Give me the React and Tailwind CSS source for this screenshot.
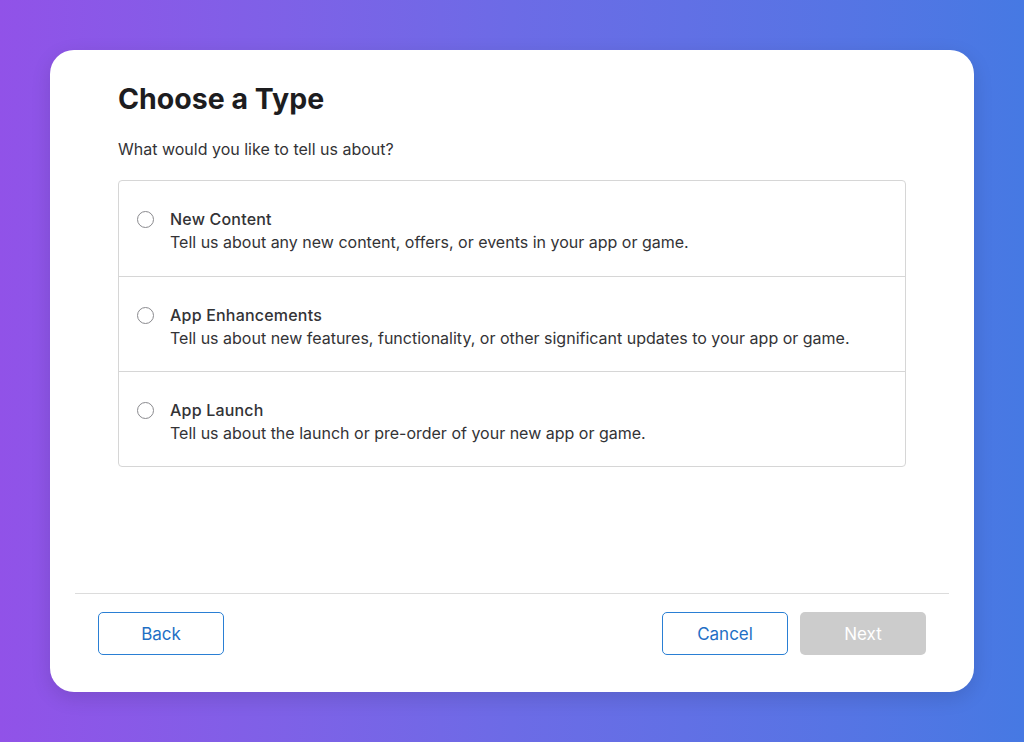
const options = [
  {
    title: "New Content",
    desc: "Tell us about any new content, offers, or events in your app or game.",
  },
  {
    title: "App Enhancements",
    desc: "Tell us about new features, functionality, or other significant updates to your app or game.",
  },
  {
    title: "App Launch",
    desc: "Tell us about the launch or pre-order of your new app or game.",
  },
];

export default function App() {
  return (
    <div
      className="h-[742px] w-full bg-gradient-to-r from-[#9152e8] via-[#6c6be6] to-[#4679e3] px-[50px] py-[50px]"
      style={{ fontFamily: "Inter, 'Noto Sans', sans-serif" }}
    >
      <div className="flex h-[642px] flex-col rounded-[24px] bg-white shadow-[0_6px_20px_rgba(0,0,0,0.12)]">
        <div className="flex-1 px-[68px] pt-[30px]">
          <h1 className="text-[28.5px] leading-[38px] font-bold text-[#1d1d1f]">
            Choose a Type
          </h1>
          <p className="mt-[21px] text-[16px] leading-[20px] text-[#333336]">
            What would you like to tell us about?
          </p>
          <div className="mt-[21px] rounded-[4px] border border-[#d6d6d6]">
            {options.map((o, i) => (
              <label
                key={o.title}
                className={
                  "flex h-[95px] cursor-pointer items-start gap-[16px] pl-[18px] pt-[27px] " +
                  (i > 0 ? "border-t border-[#d6d6d6]" : "")
                }
              >
                <span className="mt-[3px] h-[17px] w-[17px] shrink-0 rounded-full border border-[#8a8a8e] bg-white" />
                <span className="flex flex-col">
                  <span className="text-[16px] leading-[22px] font-medium tracking-[0.2px] text-[#333336]">
                    {o.title}
                  </span>
                  <span className="text-[16px] leading-[24px] text-[#333336]">
                    {o.desc}
                  </span>
                </span>
              </label>
            ))}
          </div>
        </div>
        <div className="mx-[25px] border-t border-[#dcdcdc]" />
        <div className="flex items-center justify-between px-[48px] pt-[18px] pb-[37px]">
          <button className="h-[43px] w-[126px] rounded-[5px] border border-[#2a7fd4] pt-[2px] text-[17px] text-[#1f6fc5]">
            Back
          </button>
          <div className="flex gap-[12px]">
            <button className="h-[43px] w-[126px] rounded-[5px] border border-[#2a7fd4] pt-[2px] text-[17px] text-[#1f6fc5]">
              Cancel
            </button>
            <button className="h-[43px] w-[126px] rounded-[5px] bg-[#cccccc] pt-[2px] text-[17px] text-white">
              Next
            </button>
          </div>
        </div>
      </div>
    </div>
  );
}
